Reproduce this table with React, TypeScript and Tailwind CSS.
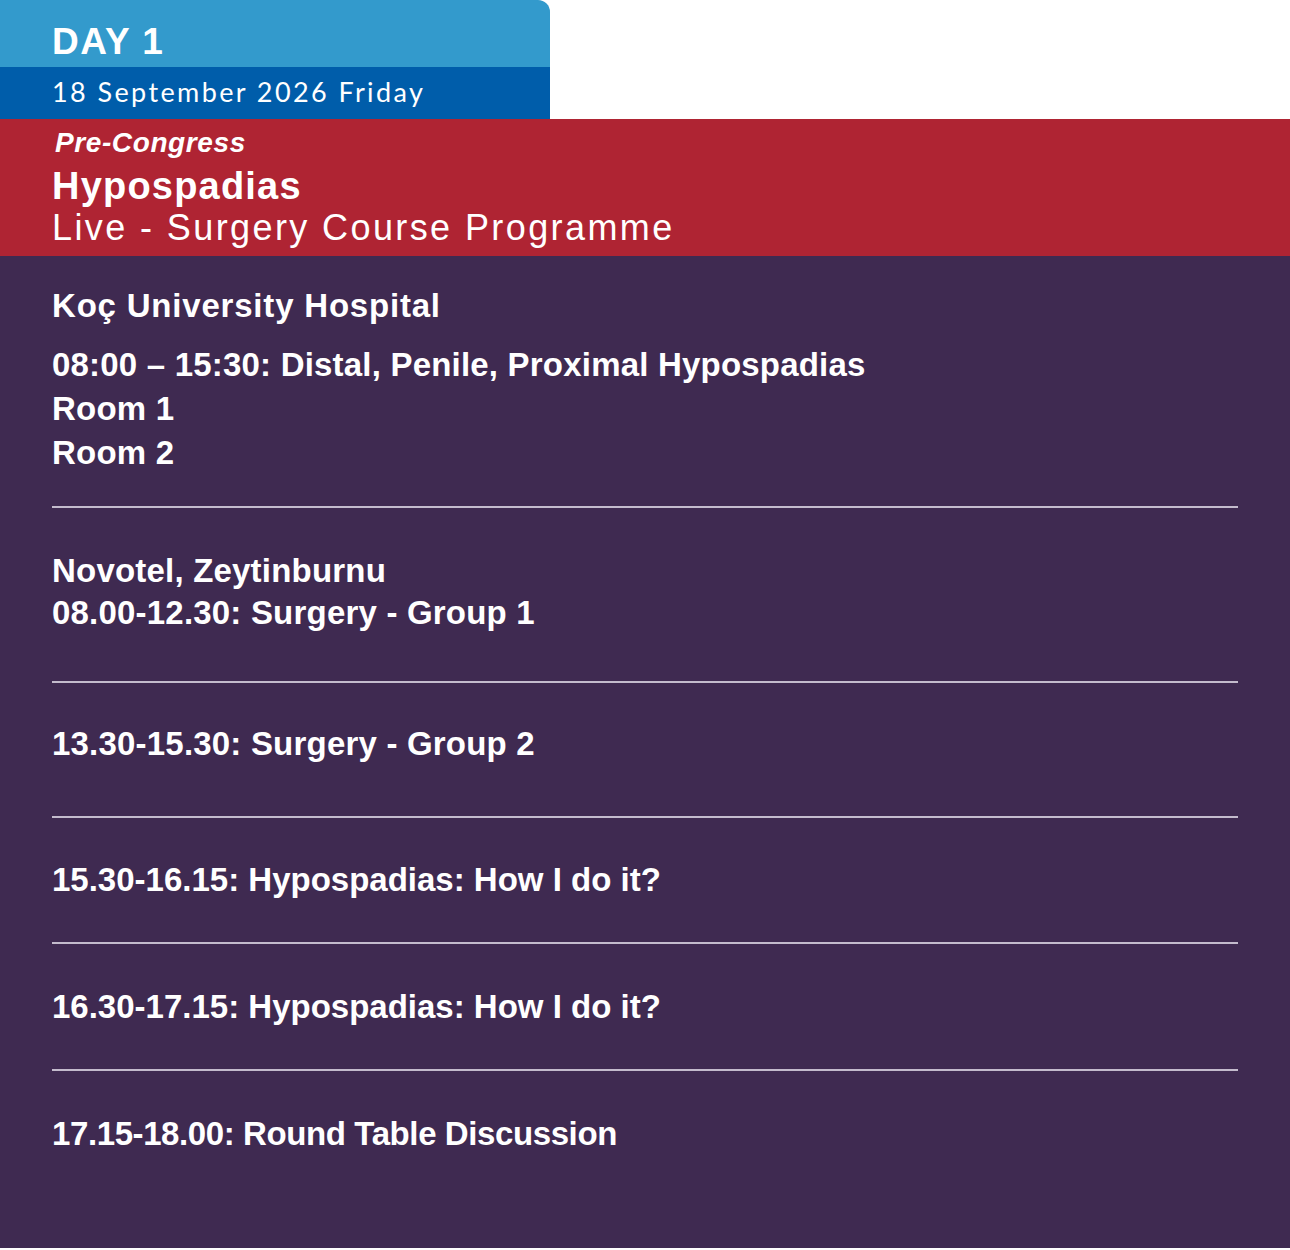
export default function App() {
  const arial = { fontFamily: "'Liberation Sans', Arial, sans-serif" };
  const lato = { fontFamily: "Lato, 'Open Sans', sans-serif" };
  return (
    <div className="w-[1290px] h-[1250px] bg-white" style={arial}>
      <div className="w-[550px] rounded-tr-[12px] overflow-hidden">
        <div className="h-[67px] bg-[#339ACC] pl-[52px] pt-[23px]">
          <div className="text-white font-bold text-[37px] leading-[37px] tracking-[1.5px]">DAY 1</div>
        </div>
        <div className="h-[52px] bg-[#005DAA] pl-[52px] pt-[11px]">
          <div className="text-white font-normal text-[27px] leading-[27px] tracking-[2.4px]" style={lato}>
            18 September 2026 Friday
          </div>
        </div>
      </div>
      <div className="h-[137px] bg-[#AF2433] pl-[52px] pt-[10px] text-white">
        <div className="font-bold italic text-[28px] leading-[28px] pl-[3px] tracking-[0.6px]">Pre-Congress</div>
        <div className="mt-[10px] font-bold text-[38px] leading-[38px] tracking-[1.2px]">Hypospadias</div>
        <div className="mt-[5px] font-normal text-[36px] leading-[36px] tracking-[2.4px]">Live - Surgery Course Programme</div>
      </div>
      <div className="h-[992px] bg-[#3F2A51] px-[52px] text-white font-bold text-[33px] leading-[44px] tracking-[0.2px]">
        <div className="pt-[28px] pb-[31px] border-b-2 border-[#C4BBCD]">
          <div className="mb-[15px] tracking-[0.8px]">Koç University Hospital</div>
          <div>08:00 – 15:30: Distal, Penile, Proximal Hypospadias</div>
          <div>Room 1</div>
          <div>Room 2</div>
        </div>
        <div className="pt-[41px] pb-[46px] border-b-2 border-[#C4BBCD]">
          <div>Novotel, Zeytinburnu</div>
          <div className="-mt-[2px]">08.00-12.30: Surgery - Group 1</div>
        </div>
        <div className="pt-[39px] pb-[50px] border-b-2 border-[#C4BBCD]">
          <div>13.30-15.30: Surgery - Group 2</div>
        </div>
        <div className="pt-[40px] pb-[40px] border-b-2 border-[#C4BBCD]">
          <div className="tracking-[0px]">15.30-16.15: Hypospadias: How I do it?</div>
        </div>
        <div className="pt-[41px] pb-[40px] border-b-2 border-[#C4BBCD]">
          <div className="tracking-[0px]">16.30-17.15: Hypospadias: How I do it?</div>
        </div>
        <div className="pt-[41px]">
          <div className="tracking-[-0.4px]">17.15-18.00: Round Table Discussion</div>
        </div>
      </div>
    </div>
  );
}
